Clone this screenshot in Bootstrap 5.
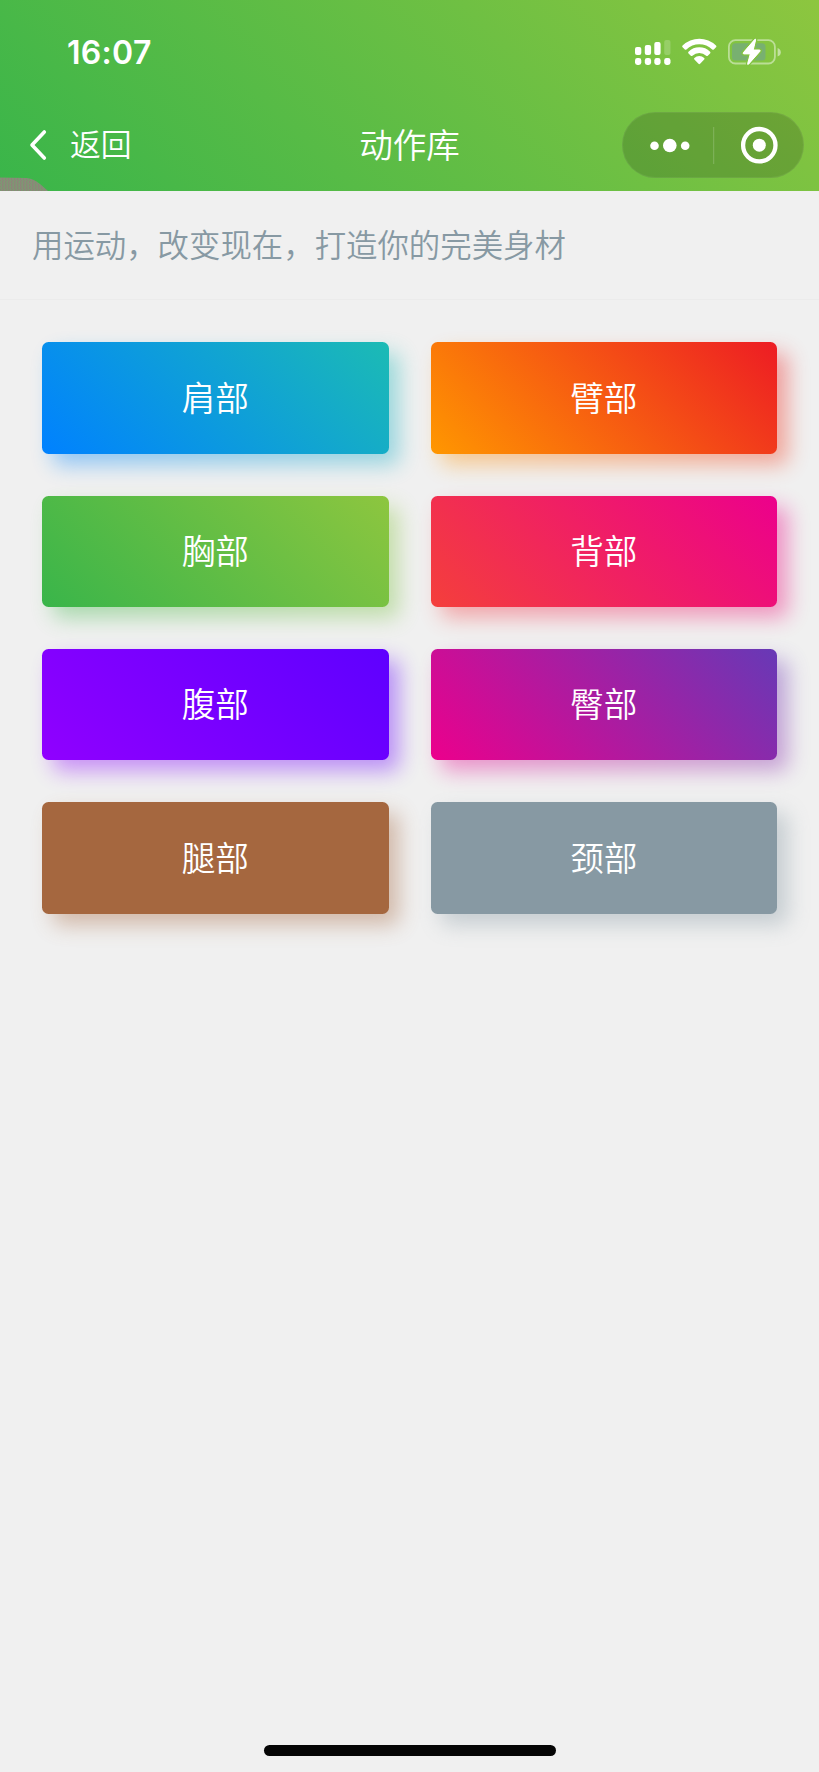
<!DOCTYPE html>
<html lang="zh-CN">
<head>
<meta charset="utf-8">
<meta name="viewport" content="width=device-width, initial-scale=1">
<title>动作库</title>
<link href="https://cdn.jsdelivr.net/npm/bootstrap@5.3.0/dist/css/bootstrap.min.css" rel="stylesheet">
<style>
  body { background: #f0f0f0; font-family: Inter, "Noto Sans CJK SC", sans-serif; height: 1772px; font-weight: 350; }
  .topbar { height: 191.3px; background: linear-gradient(45deg, #39b54a, #8dc63f); color: #fff; }
  .status-row { height: 104px; padding: 2px 37px 0 67px; }
  .clock { font-size: 32px; font-weight: 600; line-height: 1; letter-spacing: .3px; }
  .title-row { height: 82px; padding: 0 15px; }
  .side { flex: 1 1 0; }
  .chevron { margin-left: 13px; }
  .back-label { font-size: 30.8px; line-height: 1; margin-left: 22px; padding-top: 1px; }
  .page-title { font-size: 33.6px; line-height: 1; padding-top: 1px; }
  .capsule { width: 182px; height: 66px; background: rgba(0,0,0,.16); border: 1px solid rgba(255,255,255,.06); }
  .smudge { left: 0; bottom: 0; }
  .slogan { height: 109px; padding: 2px 0 0 32px; border-bottom: 1.5px solid #ebebeb; color: #8799a3; font-size: 31.42px; line-height: 1; }
  .parts { display: grid; grid-template-columns: 1fr 1fr; gap: 42px; padding: 42.2px 42px 0; }
  .part { height: 111.3px; border-radius: 6.5px; color: #fff; font-size: 33.6px; line-height: 1; padding-top: 1px; }
  .part::before { content: ""; position: absolute; z-index: -1; left: 10.9px; top: 10.9px; width: 100%; height: 100%; background: inherit; filter: blur(10.9px); opacity: .4; border-radius: inherit; }
  .part-wrap { isolation: isolate; }
  .g-blue { background: linear-gradient(45deg, #0081ff, #1cbbb4); }
  .g-orange { background: linear-gradient(45deg, #ff9700, #ed1c24); }
  .g-green { background: linear-gradient(45deg, #39b54a, #8dc63f); }
  .g-red { background: linear-gradient(45deg, #f43f3b, #ec008c); }
  .g-purple { background: linear-gradient(45deg, #9000ff, #5e00ff); }
  .g-pink { background: linear-gradient(45deg, #ec008c, #6739b6); }
  .c-brown { background: #a5673f; }
  .c-grey { background: #8799a3; }
  .home-bar { width: 292px; height: 11px; background: #050505; margin-bottom: 16px; }
</style>
</head>
<body class="d-flex flex-column m-0">
  <header class="topbar position-relative">
    <div class="status-row d-flex align-items-center justify-content-between">
      <span class="clock">16:07</span>
      <svg width="148" height="30" viewBox="634 38 148 30" fill="#fff">
        <rect x="635" y="47" width="6.3" height="8" rx="2"/>
        <rect x="644.8" y="45" width="6.3" height="10" rx="2"/>
        <rect x="654.3" y="42" width="6.3" height="13" rx="2"/>
        <rect x="664.2" y="40" width="6.3" height="15" rx="2" opacity=".2"/>
        <rect x="635" y="58" width="6.3" height="7" rx="2.4"/>
        <rect x="644.8" y="58" width="6.3" height="7" rx="2.4"/>
        <rect x="654.3" y="58" width="6.3" height="7" rx="2.4"/>
        <rect x="664.2" y="58" width="6.3" height="7" rx="2.4"/>
        <path d="M682.6 45.6a24 24 0 0 1 33.4 0q.8.8 0 1.6l-2.2 2.2q-.8.8-1.6 0a18.6 18.6 0 0 0-25.8 0q-.8.8-1.6 0l-2.2-2.2q-.8-.8 0-1.6z"/>
        <path d="M688.5 51.8a15.3 15.3 0 0 1 21.6 0q.8.8 0 1.6l-2.3 2.3q-.8.8-1.6 0a9.9 9.9 0 0 0-13.8 0q-.8.8-1.6 0l-2.3-2.3q-.8-.8 0-1.6z"/>
        <path d="M694.4 58a7 7 0 0 1 9.8 0q.8.8 0 1.6l-4.1 4.2q-.8.8-1.6 0l-4.1-4.2q-.8-.8 0-1.6z"/>
        <rect x="728.9" y="40.2" width="46" height="23.3" rx="6.5" fill="none" stroke="#fff" stroke-opacity=".45" stroke-width="1.8"/>
        <rect x="732" y="43.3" width="33.5" height="17.2" rx="3.5" fill="#78b070"/>
        <path d="M777.6 48v8.6q3.2-1.2 3.2-4.3t-3.2-4.3z" opacity=".5"/>
        <path d="M754.7 39.5q1.2-1 .9.6L753.2 50h6.2q1.3.2.5 1.3L748.7 64q-1.4 1-1-.6l2.6-9.5h-6.4q-1.3-.2-.5-1.3z" stroke="#82c341" stroke-width="3.5" paint-order="stroke"/>
        <path d="M754.7 39.5q1.2-1 .9.6L753.2 50h6.2q1.3.2.5 1.3L748.7 64q-1.4 1-1-.6l2.6-9.5h-6.4q-1.3-.2-.5-1.3z" stroke="#fff" stroke-width="1"/>
      </svg>
    </div>
    <nav class="title-row d-flex align-items-center">
      <div class="side d-flex align-items-center">
        <svg class="chevron" width="20" height="32" viewBox="0 0 20 32" fill="none" stroke="#fff" stroke-width="3.6" stroke-linecap="round" stroke-linejoin="round"><path d="M16.3 3L4 16l12.3 13"/></svg>
        <span class="back-label">返回</span>
      </div>
      <span class="page-title">动作库</span>
      <div class="side d-flex justify-content-end">
        <div class="capsule rounded-pill">
          <svg class="d-block" width="180" height="64" viewBox="623 113 180 64" fill="#fff">
            <circle cx="654.5" cy="145.7" r="4.3"/>
            <circle cx="669.8" cy="145.5" r="6.8"/>
            <circle cx="685.2" cy="145.7" r="4.3"/>
            <rect x="713.2" y="127" width="1" height="37" opacity=".2"/>
            <circle cx="759.3" cy="145.2" r="16.2" fill="none" stroke="#fff" stroke-width="4.3"/>
            <circle cx="759.3" cy="145.2" r="6.5"/>
          </svg>
        </div>
      </div>
    </nav>
    <svg class="smudge position-absolute" width="48" height="14" viewBox="0 0 48 14">
      <defs><pattern id="grain" width="3" height="3" patternUnits="userSpaceOnUse"><rect width="3" height="3" fill="#7f9673"/><path d="M0 0h1v1H0zM2 1h1v2H2z" fill="#927e7b"/></pattern></defs>
      <path d="M0 .5L27 1Q34 2 40 7L48 14H0z" fill="url(#grain)"/>
    </svg>
  </header>

  <div class="slogan d-flex align-items-center"><span>用运动，改变现在，打造你的完美身材</span></div>

  <main class="parts part-wrap">
    <a class="part g-blue position-relative d-flex align-items-center justify-content-center text-decoration-none">肩部</a>
    <a class="part g-orange position-relative d-flex align-items-center justify-content-center text-decoration-none">臂部</a>
    <a class="part g-green position-relative d-flex align-items-center justify-content-center text-decoration-none">胸部</a>
    <a class="part g-red position-relative d-flex align-items-center justify-content-center text-decoration-none">背部</a>
    <a class="part g-purple position-relative d-flex align-items-center justify-content-center text-decoration-none">腹部</a>
    <a class="part g-pink position-relative d-flex align-items-center justify-content-center text-decoration-none">臀部</a>
    <a class="part c-brown position-relative d-flex align-items-center justify-content-center text-decoration-none">腿部</a>
    <a class="part c-grey position-relative d-flex align-items-center justify-content-center text-decoration-none">颈部</a>
  </main>

  <div class="home-bar rounded-pill mt-auto mx-auto"></div>
<script src="https://cdn.jsdelivr.net/npm/bootstrap@5.3.0/dist/js/bootstrap.bundle.min.js"></script>
</body>
</html>
